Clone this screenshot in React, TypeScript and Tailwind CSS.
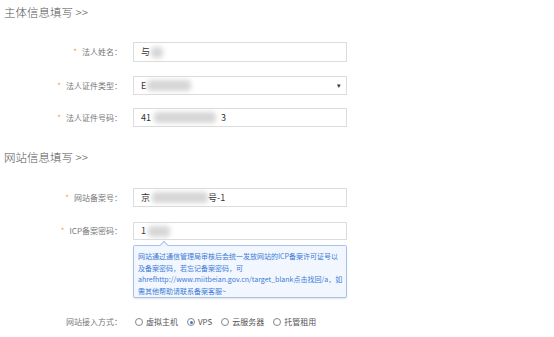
import React from "react";

const font = { fontFamily: '"Noto Sans CJK SC", "Noto Sans", sans-serif' };

function Label({ text }: { text: string }) {
    return (
        <div className="w-[123px] shrink-0 flex items-center justify-end pr-[1px] text-[8px] text-[#777]">
            <span className="text-[#f7a04a] mr-[5px]">*</span>
            <span>{text}</span>
        </div>
    );
}

function Smudge({ className }: { className: string }) {
    return <span className={`inline-block h-[11px] rounded-[4px] bg-[#d6d6d6] blur-[2.5px] ${className}`} />;
}

function Field({ children, h = "h-[19px]" }: { children: React.ReactNode; h?: string }) {
    return (
        <div className={`ml-[10px] w-[214px] ${h} border border-[#dcdcdc] bg-white flex items-center pl-[7px] text-[9px] text-[#333] relative`}>
            {children}
        </div>
    );
}

function Radio({ label, checked }: { label: string; checked?: boolean }) {
    return (
        <span className="flex items-center gap-[3px] mr-[9px]">
            <span className="w-[8px] h-[8px] rounded-full border border-[#888] flex items-center justify-center">
                {checked && <span className="w-[3px] h-[3px] rounded-full bg-[#3b7bd4]" />}
            </span>
            <span>{label}</span>
        </span>
    );
}

export default function App() {
    return (
        <div className="w-[554px] h-[337px] bg-white overflow-hidden" style={font}>
            {/* 主体信息 */}
            <div className="h-[26px] flex items-center pl-[4px] text-[11.5px] font-light text-[#555]">主体信息填写 &gt;&gt;</div>

            <div className="mt-[16px] flex">
                <Label text="法人姓名：" />
                <Field h="h-[20px]">
                    <span>与</span>
                    <Smudge className="w-[12px] ml-[1px]" />
                </Field>
            </div>

            <div className="mt-[14px] flex">
                <Label text="法人证件类型：" />
                <Field>
                    <span>E</span>
                    <Smudge className="w-[44px] ml-[1px]" />
                    <span className="absolute right-[5px] top-[3px] text-[7px] text-[#333]">▾</span>
                </Field>
            </div>

            <div className="mt-[13px] flex">
                <Label text="法人证件号码：" />
                <Field>
                    <span>41</span>
                    <Smudge className="w-[62px] ml-[3px]" />
                    <span className="ml-[5px]">3</span>
                </Field>
            </div>

            {/* 网站信息 */}
            <div className="mt-[20px] h-[22px] flex items-center pl-[4px] text-[11.5px] font-light text-[#555]">网站信息填写 &gt;&gt;</div>

            <div className="mt-[19px] flex">
                <Label text="网站备案号：" />
                <Field>
                    <span>京</span>
                    <Smudge className="w-[56px] ml-[2px]" />
                    <span>号-1</span>
                </Field>
            </div>

            <div className="mt-[15px] flex">
                <Label text="ICP备案密码：" />
                <Field h="h-[18px]">
                    <span>1</span>
                    <Smudge className="w-[22px] ml-[2px]" />
                </Field>
            </div>

            <div className="mt-[5px] flex">
                <div className="w-[123px] shrink-0" />
                <div className="ml-[10px] w-[214px] h-[53px] border border-[#a9c2ea] bg-[#f2f7ff] rounded-[2px] relative px-[4px] pt-[5px] text-[7px] leading-[11.5px] text-[#3b7bd4] shadow-[0_1px_2px_rgba(0,0,0,0.12)]">
                    <span className="absolute -top-[4px] left-[27px] w-[6px] h-[6px] rotate-45 bg-[#f2f7ff] border-l border-t border-[#a9c2ea]" />
                    <div className="whitespace-nowrap">网站通过通信管理局审核后会统一发放网站的ICP备案许可证号以</div>
                    <div className="whitespace-nowrap">及备案密码，若忘记备案密码，可</div>
                    <div className="whitespace-nowrap">ahrefhttp://www.miitbeian.gov.cn/target_blank点击找回/a，如</div>
                    <div className="whitespace-nowrap">需其他帮助请联系备案客服~</div>
                </div>
            </div>

            <div className="mt-[17px] h-[14px] flex items-center">
                <div className="w-[123px] shrink-0 flex justify-end pr-[1px] text-[8px] text-[#777]">网站接入方式：</div>
                <div className="ml-[12px] flex items-center text-[8px] text-[#555]">
                    <Radio label="虚拟主机" />
                    <Radio label="VPS" checked />
                    <Radio label="云服务器" />
                    <Radio label="托管租用" />
                </div>
            </div>
        </div>
    );
}
